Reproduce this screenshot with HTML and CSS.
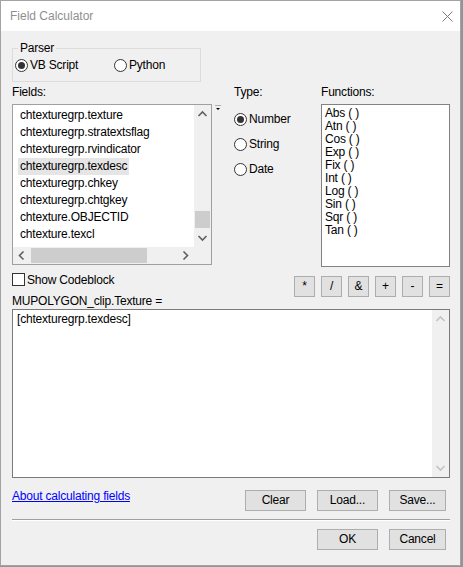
FILE: index.html
```html
<!DOCTYPE html>
<html>
<head>
<meta charset="utf-8">
<title>Field Calculator</title>
<link rel="stylesheet" href="styles.css">
</head>
<body>
<div class="window">
  <div class="titlebar">
    <span class="title">Field Calculator</span>
    <svg class="close" width="11" height="11" viewBox="0 0 11 11"><path d="M0.5 0.5 L10.5 10.5 M10.5 0.5 L0.5 10.5" stroke="#7a7a7a" stroke-width="1" fill="none"/></svg>
  </div>
  <div class="content">
    <fieldset class="parser">
      <legend>Parser</legend>
      <div class="radio-row">
        <div class="radio on vb"><span class="circle"></span><span>VB Script</span></div>
        <div class="radio"><span class="circle"></span><span>Python</span></div>
      </div>
    </fieldset>

    <div class="cols">
      <div class="col">
        <div class="lbl">Fields:</div>
        <div class="fields-row">
          <div class="listbox">
            <div class="items">
              <div class="item">chtexturegrp.texture</div>
              <div class="item">chtexturegrp.stratextsflag</div>
              <div class="item">chtexturegrp.rvindicator</div>
              <div class="item sel">chtexturegrp.texdesc</div>
              <div class="item">chtexturegrp.chkey</div>
              <div class="item">chtexturegrp.chtgkey</div>
              <div class="item">chtexture.OBJECTID</div>
              <div class="item">chtexture.texcl</div>
            </div>
            <div class="vscroll">
              <svg class="arrow" width="17" height="17" viewBox="0 0 17 17"><polyline points="4.5,11 8.5,7 12.5,11" stroke="#606060" stroke-width="1.6" fill="none"/></svg>
              <div class="vtrack"><div class="vthumb"></div></div>
              <svg class="arrow" width="17" height="17" viewBox="0 0 17 17"><polyline points="4.5,6 8.5,10 12.5,6" stroke="#606060" stroke-width="1.6" fill="none"/></svg>
            </div>
            <div class="hscroll">
              <svg class="arrow" width="17" height="17" viewBox="0 0 17 17"><polyline points="10.5,4.5 6.5,8.5 10.5,12.5" stroke="#606060" stroke-width="1.6" fill="none"/></svg>
              <div class="htrack"><div class="hthumb"></div></div>
              <svg class="arrow" width="17" height="17" viewBox="0 0 17 17"><polyline points="6.5,4.5 10.5,8.5 6.5,12.5" stroke="#606060" stroke-width="1.6" fill="none"/></svg>
            </div>
            <div class="corner"></div>
          </div>
          <svg class="ddmark" width="6" height="6" viewBox="0 0 6 6"><line x1="0" y1="0.5" x2="6" y2="0.5" stroke="#b0b0b0" stroke-width="1"/><polygon points="1,3 5,3 3,5" fill="#000"/></svg>
        </div>
      </div>

      <div class="col">
        <div class="lbl">Type:</div>
        <div class="type-list">
          <div class="radio on"><span class="circle"></span><span>Number</span></div>
          <div class="radio"><span class="circle"></span><span>String</span></div>
          <div class="radio"><span class="circle"></span><span>Date</span></div>
        </div>
      </div>

      <div class="col">
        <div class="lbl">Functions:</div>
        <div class="funcs">
          <div class="func">Abs ( )</div>
          <div class="func">Atn ( )</div>
          <div class="func">Cos ( )</div>
          <div class="func">Exp ( )</div>
          <div class="func">Fix ( )</div>
          <div class="func">Int ( )</div>
          <div class="func">Log ( )</div>
          <div class="func">Sin ( )</div>
          <div class="func">Sqr ( )</div>
          <div class="func">Tan ( )</div>
        </div>
      </div>
    </div>

    <div class="row2">
      <div class="left2">
        <div class="checkrow"><span class="check"></span><span>Show Codeblock</span></div>
        <div class="exprlbl">MUPOLYGON_clip.Texture =</div>
      </div>
      <div class="ops">
        <div class="btn op">*</div>
        <div class="btn op">/</div>
        <div class="btn op">&amp;</div>
        <div class="btn op">+</div>
        <div class="btn op">-</div>
        <div class="btn op">=</div>
      </div>
    </div>

    <div class="expr">
      <div class="exprtext">[chtexturegrp.texdesc]</div>
      <div class="escroll">
        <svg class="arrow" width="17" height="17" viewBox="0 0 17 17"><polyline points="4.5,11 8.5,7 12.5,11" stroke="#c2c2c2" stroke-width="1.6" fill="none"/></svg>
        <div class="etrack"></div>
        <svg class="arrow" width="17" height="17" viewBox="0 0 17 17"><polyline points="4.5,6 8.5,10 12.5,6" stroke="#c2c2c2" stroke-width="1.6" fill="none"/></svg>
      </div>
    </div>

    <div class="actions">
      <a class="link" href="#">About calculating fields</a>
      <div class="btn w61">Clear</div>
      <div class="btn w61">Load...</div>
      <div class="btn w57 last">Save...</div>
    </div>

    <div class="sep"></div>

    <div class="okrow">
      <div class="btn w61">OK</div>
      <div class="btn w57 last">Cancel</div>
    </div>
  </div>
</div>
</body>
</html>
```

FILE: styles.css
```css
* { box-sizing: border-box; }
html, body { margin: 0; padding: 0; }
body {
  width: 463px;
  height: 567px;
  overflow: hidden;
  background: #8d9793;
  font-family: "Liberation Sans", Arial, sans-serif;
  font-size: 12px;
  color: #000;
  letter-spacing: -0.2px;
}
.window {
  width: 461px;
  height: 566px;
  border: 1px solid #a3a3a3;
  background: #f0f0f0;
  display: flex;
  flex-direction: column;
}
.titlebar {
  height: 30px;
  flex: none;
  background: #fff;
  display: flex;
  align-items: center;
  justify-content: space-between;
  padding: 0 7px 0 9px;
}
.title { color: #8f8f8f; letter-spacing: 0; }
.close { display: block; }

.content {
  flex: 1;
  padding: 10px 10px 0 11px;
  display: flex;
  flex-direction: column;
}

.parser {
  margin: 0;
  padding: 4px 0 9px 2px;
  border: 1px solid #dcdcdc;
  width: 189px;
  min-width: 0;
}
.parser legend {
  padding: 0 2px;
  margin-left: 3px;
  line-height: 14px;
}
.radio-row { display: flex; }
.radio {
  display: flex;
  align-items: center;
  gap: 2px;
  height: 13px;
  line-height: 13px;
}
.radio.vb { width: 99px; }
.circle {
  width: 13px;
  height: 13px;
  border: 1px solid #333;
  border-radius: 50%;
  background: #fff;
  display: flex;
  align-items: center;
  justify-content: center;
  flex: none;
}
.radio.on .circle::after {
  content: "";
  width: 7px;
  height: 7px;
  border-radius: 50%;
  background: #333;
}

.cols {
  display: grid;
  grid-template-columns: 222px 87px 129px;
  margin-top: 3px;
  align-items: start;
}
.lbl {
  line-height: 15px;
  height: 15px;
  margin-bottom: 4px;
}
.fields-row { display: flex; align-items: flex-start; }
.listbox {
  width: 200px;
  height: 161px;
  border: 1px solid #a0a0a0;
  background: #fff;
  display: grid;
  grid-template-columns: 1fr 17px;
  grid-template-rows: 1fr 17px;
}
.items {
  padding: 2px 0 0 5px;
  overflow: hidden;
}
.item {
  width: max-content;
  height: 17px;
  line-height: 17px;
  padding: 0 2px;
  white-space: nowrap;
}
.item.sel { background: #e5e5e5; }
.arrow { display: block; flex: none; }
.vscroll {
  background: #f0f0f0;
  display: flex;
  flex-direction: column;
}
.vtrack { flex: 1; padding-top: 89px; }
.vthumb { height: 17px; margin: 0 1px; background: #cdcdcd; }
.hscroll {
  background: #f0f0f0;
  display: flex;
}
.htrack { flex: 1; padding: 1px 0 1px 1px; }
.hthumb { width: 116px; height: 15px; background: #cdcdcd; }
.corner { background: #f0f0f0; }
.ddmark { display: block; margin-left: 3px; margin-top: 1px; }

.type-list {
  padding-top: 9px;
  display: flex;
  flex-direction: column;
  gap: 12px;
}
.funcs {
  height: 163px;
  border: 1px solid #828282;
  background: #fff;
  padding: 2px 0 0 3px;
}
.func { line-height: 13px; height: 13px; }

.row2 {
  display: flex;
  justify-content: space-between;
  align-items: flex-start;
}
.checkrow {
  margin-top: 6px;
  display: flex;
  align-items: center;
  gap: 2px;
  height: 13px;
}
.check {
  width: 13px;
  height: 13px;
  border: 1px solid #333;
  background: #fff;
  flex: none;
}
.exprlbl {
  margin-top: 8px;
  line-height: 15px;
  height: 15px;
}
.ops {
  display: flex;
  gap: 6px;
  margin-top: 9px;
}
.btn {
  height: 21px;
  border: 1px solid #adadad;
  background: #e1e1e1;
  display: flex;
  align-items: center;
  justify-content: center;
  line-height: 19px;
}
.op { width: 21px; }

.expr {
  height: 169px;
  border: 1px solid #7a7a7a;
  background: #fff;
  display: flex;
}
.exprtext {
  flex: 1;
  padding: 2px 0 0 4px;
  line-height: 15px;
}
.escroll {
  width: 17px;
  background: #f0f0f0;
  display: flex;
  flex-direction: column;
}
.etrack { flex: 1; }

.actions {
  margin-top: 12px;
  display: flex;
  align-items: flex-start;
  gap: 11px;
}
.link {
  flex: 1;
  color: #0000ff;
  text-decoration: underline;
  line-height: 12px;
}
.w61 { width: 61px; }
.w57 { width: 57px; }
.last { margin-right: 4px; }

.sep {
  margin-top: 8px;
  height: 2px;
  border-top: 1px solid #a0a0a0;
  border-bottom: 1px solid #fff;
}
.okrow {
  margin-top: 8px;
  display: flex;
  justify-content: flex-end;
  gap: 11px;
}
```
